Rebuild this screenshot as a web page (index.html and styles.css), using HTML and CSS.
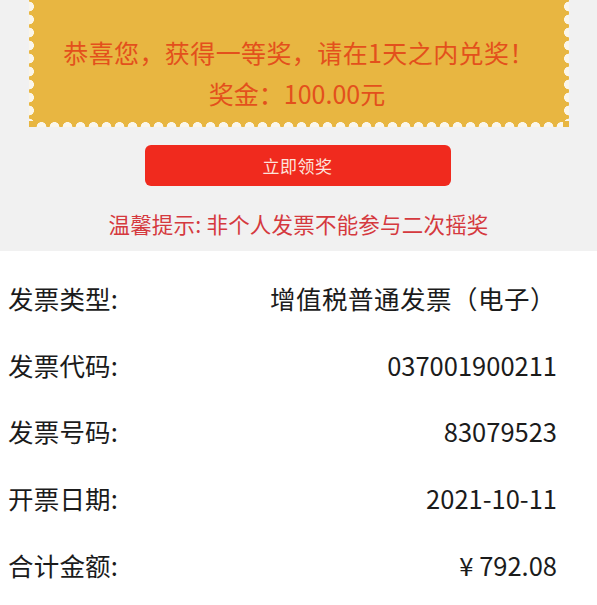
FILE: index.html
```html
<!DOCTYPE html>
<html lang="zh-CN">
<head>
<meta charset="utf-8">
<link rel="stylesheet" href="styles.css">
</head>
<body>
<div class="top">
  <div class="stamp">
    <p class="line1">恭喜您，获得一等奖，请在1天之内兑奖！</p>
    <p class="line2">奖金：100.00元</p>
    <span class="perf-bottom"></span>
  </div>
  <div class="btn">立即领奖</div>
  <p class="tip">温馨提示: 非个人发票不能参与二次摇奖</p>
</div>
<div class="info">
  <div class="row"><span class="label">发票类型:</span><span class="value type">增值税普通发票（电子）</span></div>
  <div class="row"><span class="label">发票代码:</span><span class="value">037001900211</span></div>
  <div class="row"><span class="label">发票号码:</span><span class="value">83079523</span></div>
  <div class="row"><span class="label">开票日期:</span><span class="value">2021-10-11</span></div>
  <div class="row"><span class="label">合计金额:</span><span class="value">¥ 792.08</span></div>
</div>
</body>
</html>
```

FILE: styles.css
```css
html, body {
  margin: 0;
  padding: 0;
}
body {
  background: #ffffff;
  font-family: "Noto Sans CJK SC", "Noto Sans", sans-serif;
  width: 597px;
  overflow: hidden;
}
.top {
  background: #f1f1f1;
  height: 251px;
  display: flex;
  flex-direction: column;
  align-items: center;
}
.stamp {
  position: relative;
  width: 540px;
  height: 127px;
  margin-left: 1px;
  background: #e8b641;
  display: flex;
  flex-direction: column;
  align-items: center;
  box-sizing: border-box;
  padding-top: 35px;
}
.stamp::before,
.stamp::after {
  content: "";
  position: absolute;
  top: 0;
  bottom: 6px;
  width: 6px;
  background-size: 6px 13px;
  background-repeat: repeat-y;
}
.stamp::before {
  left: 0;
  background-image: radial-gradient(circle at 0 6.5px, #faf6ec 4.6px, transparent 5.2px);
}
.stamp::after {
  right: 0;
  background-image: radial-gradient(circle at 6px 6.5px, #faf6ec 4.6px, transparent 5.2px);
}
.perf-bottom {
  position: absolute;
  left: 6px;
  right: 6px;
  bottom: 0;
  height: 6px;
  background-image: radial-gradient(circle at 6.5px 6px, #faf6ec 4.6px, transparent 5.2px);
  background-size: 13px 6px;
  background-repeat: repeat-x;
}
.line1,
.line2 {
  margin: 0;
  color: #e3501c;
  font-size: 25px;
  line-height: 34px;
  white-space: nowrap;
}
.line1 {
  letter-spacing: 0.4px;
}
.line2 {
  margin-top: 7px;
  margin-left: -4px;
}
.btn {
  margin-top: 18px;
  margin-left: -2px;
  width: 306px;
  height: 41px;
  border-radius: 6px;
  background: #f02a1e;
  color: #fde3dc;
  font-size: 17px;
  display: flex;
  align-items: center;
  justify-content: center;
  letter-spacing: 0.5px;
}
.tip {
  margin: 24px 0 0 0;
  color: #d5393e;
  font-size: 21.5px;
  line-height: 28px;
  letter-spacing: 0.2px;
}
.info {
  padding-top: 13px;
}
.row {
  height: 66.8px;
  display: flex;
  align-items: center;
  justify-content: space-between;
  padding: 0 40px 0 8px;
  font-size: 25.5px;
  color: #1b1b1b;
}
.label {
  letter-spacing: 0.2px;
}
.value.type {
  letter-spacing: 0.5px;
  margin-right: 1px;
}
```
